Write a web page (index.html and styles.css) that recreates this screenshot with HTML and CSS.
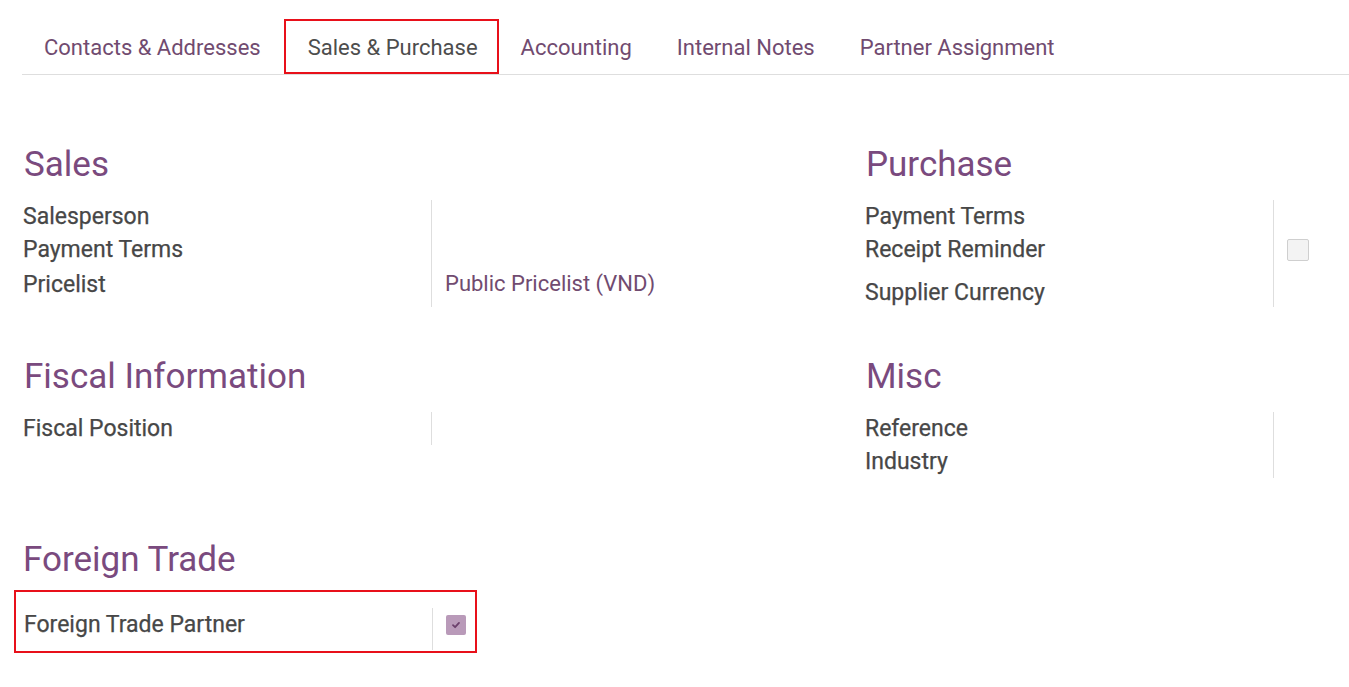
FILE: index.html
```html
<!DOCTYPE html>
<html>
<head>
<meta charset="utf-8">
<link rel="stylesheet" href="styles.css">
</head>
<body>
<div class="page">
  <nav class="tabs">
    <a class="tab">Contacts &amp; Addresses</a>
    <a class="tab active">Sales &amp; Purchase</a>
    <a class="tab">Accounting</a>
    <a class="tab">Internal Notes</a>
    <a class="tab">Partner Assignment</a>
  </nav>

  <div class="grid first">
    <section class="group">
      <h2 class="heading">Sales</h2>
      <div class="fields">
        <div class="labels">
          <div class="label r1">Salesperson</div>
          <div class="label r1">Payment Terms</div>
          <div class="label r3">Pricelist</div>
        </div>
        <div class="values">
          <div class="value r1"></div>
          <div class="value r1"></div>
          <div class="value r3 link">Public Pricelist (VND)</div>
        </div>
      </div>
    </section>
    <section class="group">
      <h2 class="heading">Purchase</h2>
      <div class="fields">
        <div class="labels">
          <div class="label r1">Payment Terms</div>
          <div class="label r1">Receipt Reminder</div>
          <div class="label r3b">Supplier Currency</div>
        </div>
        <div class="values">
          <div class="value r1"></div>
          <div class="value r1"><span class="checkbox"></span></div>
          <div class="value r3b"></div>
        </div>
      </div>
    </section>
  </div>

  <div class="grid second">
    <section class="group">
      <h2 class="heading">Fiscal Information</h2>
      <div class="fields">
        <div class="labels">
          <div class="label r1">Fiscal Position</div>
        </div>
        <div class="values">
          <div class="value r1"></div>
        </div>
      </div>
    </section>
    <section class="group">
      <h2 class="heading">Misc</h2>
      <div class="fields">
        <div class="labels">
          <div class="label r1">Reference</div>
          <div class="label r1">Industry</div>
        </div>
        <div class="values">
          <div class="value r1"></div>
          <div class="value r1"></div>
        </div>
      </div>
    </section>
  </div>

  <div class="grid third">
    <section class="group">
      <h2 class="heading">Foreign Trade</h2>
      <div class="marked">
        <div class="fields">
          <div class="labels">
            <div class="label r4">Foreign Trade Partner</div>
          </div>
          <div class="values">
            <div class="value r4"><span class="checkbox checked"><svg viewBox="0 0 10 10" width="10" height="10"><path d="M2 5.2 L4.1 7.2 L8 2.9" fill="none" stroke="#6b3f6b" stroke-width="1.8" stroke-linecap="round" stroke-linejoin="round"/></svg></span></div>
          </div>
        </div>
      </div>
    </section>
  </div>
</div>
</body>
</html>
```

FILE: styles.css
```css
* { box-sizing: border-box; }
html, body {
  margin: 0;
  padding: 0;
  background: #ffffff;
}
body {
  font-family: Roboto, "Noto Sans", sans-serif;
  color: #4a4a4a;
}
.page {
  padding: 19px 0 0 22px;
}
.tabs {
  display: flex;
  border-bottom: 1px solid #dedede;
  height: 56px;
}
.tab {
  display: flex;
  align-items: center;
  padding: 2px 23px 0 22px;
  height: 55px;
  font-size: 22px;
  color: #714b70;
  cursor: pointer;
}
.tab.active {
  color: #4d4d4d;
  border: 2px solid #e8101a;
  padding: 2px 19px 0 22px;
}
.grid {
  display: grid;
  grid-template-columns: 842px 1fr;
}
.first { margin-top: 71px; }
.second { margin-top: 51px; }
.third { margin-top: 63px; }
.heading {
  margin: 0 0 16px 2px;
  font-weight: 400;
  font-size: 35px;
  line-height: 38px;
  color: #7a4a7e;
}
.third .heading { margin-bottom: 11px; margin-left: 1px; }
.fields {
  display: flex;
}
.labels {
  width: 410px;
  padding-left: 1px;
  border-right: 1px solid #dedede;
}
.label {
  font-size: 23px;
  line-height: 33px;
  color: #474747;
  font-weight: 400;
  -webkit-text-stroke: 0.25px #474747;
}
.label, .value { height: 33px; }
.r3 { height: 41px; line-height: 37px; }
.r3b { height: 41px; line-height: 54px; }
.r4 { height: 42px; line-height: 34px; }
.values {
  padding-left: 13px;
  flex: 1;
}
.value {
  display: flex;
  align-items: center;
  font-size: 22px;
}
.value.r3 { align-items: flex-start; padding-top: 1px; line-height: 33px; }
.link { color: #714b70; }
.checkbox {
  display: inline-flex;
  align-items: center;
  justify-content: center;
  width: 22px;
  height: 22px;
  border: 1px solid #cfcfcf;
  background: #f3f3f3;
  border-radius: 2px;
}
.checkbox.checked {
  width: 20px;
  height: 20px;
  border: none;
  background: #b99ab9;
  margin-top: -8px;
}
.value.r4 { padding-left: 0; }
.marked {
  width: 463px;
  margin-left: -8px;
  border: 2px solid #e8101a;
  padding: 16px 9px 1px 7px;
}
.marked .labels { width: 410px; flex: none; }
```
